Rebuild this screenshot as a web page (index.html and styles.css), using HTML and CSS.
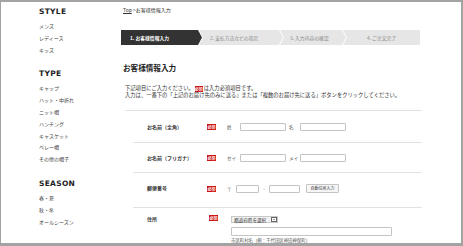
FILE: index.html
```html
<!DOCTYPE html>
<html lang="ja">
<head>
  <meta charset="UTF-8">
  <meta name="viewport" content="width=device-width, initial-scale=1.0">
  <link rel="stylesheet" href="styles.css">
  <title>お客様情報入力</title>
</head>
<body>

<div id="page">
  <div id="sidebar">
    <h3 class="side-title">STYLE</h3>
    <ul class="side-list">
      <li>メンズ</li>
      <li>レディース</li>
      <li>キッズ</li>
    </ul>
    <h3 class="side-title">TYPE</h3>
    <ul class="side-list">
      <li>キャップ</li>
      <li>ハット・中折れ</li>
      <li>ニット帽</li>
      <li>ハンチング</li>
      <li>キャスケット</li>
      <li>ベレー帽</li>
      <li>その他の帽子</li>
    </ul>
    <h3 class="side-title">SEASON</h3>
    <ul class="side-list">
      <li>春・夏</li>
      <li>秋・冬</li>
      <li>オールシーズン</li>
    </ul>
  </div>

  <div id="main">
    <div class="breadcrumb"><a href="#">Top</a> &gt;お客様情報入力</div>

    <div class="steps">
      <div class="step step-1 current">1. お客様情報入力</div>
      <div class="step step-2">2. 支払方法などの指定</div>
      <div class="step step-3">3. 入力内容の確認</div>
      <div class="step step-4">4. ご注文完了</div>
    </div>

    <h2 class="page-title">お客様情報入力</h2>

    <div class="intro">
      <p>下記項目にご入力ください。<span class="req">必須</span>は入力必須項目です。</p>
      <p>入力は、一番下の「上記のお届け先のみに送る」または「複数のお届け先に送る」ボタンをクリックしてください。</p>
    </div>

    <div class="form">
      <div class="form-row row-name">
        <div class="label">お名前（全角）</div>
        <span class="req">必須</span>
        <div class="fields">
          <span class="field-label">姓</span><input class="text" type="text">
          <span class="field-label second">名</span><input class="text" type="text">
        </div>
      </div>

      <div class="form-row row-kana">
        <div class="label">お名前（フリガナ）</div>
        <span class="req">必須</span>
        <div class="fields">
          <span class="field-label">セイ</span><input class="text" type="text">
          <span class="field-label second">メイ</span><input class="text" type="text">
        </div>
      </div>

      <div class="form-row row-zip">
        <div class="label">郵便番号</div>
        <span class="req">必須</span>
        <div class="fields">
          <span class="zip-mark">〒</span><input class="text zip1" type="text">
          <span class="zip-dash">-</span><input class="text zip2" type="text">
          <button class="zip-btn" type="button">自動住所入力</button>
        </div>
      </div>

      <div class="form-row row-address">
        <div class="label">住所</div>
        <span class="req">必須</span>
        <div class="fields column">
          <div class="select">都道府県を選択<span class="select-arrow"></span></div>
          <input class="text address" type="text">
          <div class="hint">市区町村名（例：千代田区神田神保町）</div>
        </div>
      </div>
    </div>
  </div>
</div>

</body>
</html>
```

FILE: styles.css
```css
body {
  margin: 0;
  background-color: #a3a3a3;
  font-family: 'Noto Sans CJK JP', 'Noto Sans', sans-serif;
  color: #333;
}

#page {
  display: flex;
  width: 460px;
  height: 241px;
  margin: 2px 0 0 1px;
  background-color: #fff;
  overflow: hidden;
}

/* sidebar */
#sidebar {
  width: 82px;
  flex-shrink: 0;
  padding: 5px 0 0 38px;
}

.side-title {
  margin: 0 0 3px;
  font-family: 'DejaVu Sans', sans-serif;
  font-size: 7.5px;
  line-height: 10px;
  font-weight: bold;
  letter-spacing: 0.3px;
  color: #222;
}

.side-list {
  list-style: none;
  margin: 0 0 14px;
  padding: 0;
}

.side-list li {
  font-size: 5px;
  line-height: 11.8px;
  color: #444;
}

/* main */
#main {
  width: 302px;
  padding-top: 5px;
}

.breadcrumb {
  padding-left: 2px;
  font-size: 5px;
  line-height: 6px;
  color: #333;
}

.breadcrumb a {
  color: #333;
}

.steps {
  display: flex;
  height: 15px;
  margin-top: 17px;
}

.step {
  height: 15px;
  line-height: 15px;
  font-size: 4.8px;
  color: #888;
  background-color: #e6e6e6;
  white-space: nowrap;
  clip-path: polygon(0 0, calc(100% - 4px) 0, 100% 50%, calc(100% - 4px) 100%, 0 100%, 4px 50%);
  margin-left: -3px;
}

.step-1 {
  width: 81px;
  padding-left: 9px;
  box-sizing: border-box;
  margin-left: 0;
  clip-path: polygon(0 0, calc(100% - 4px) 0, 100% 50%, calc(100% - 4px) 100%, 0 100%);
}

.step-2 {
  width: 84px;
  padding-left: 11px;
  box-sizing: border-box;
}

.step-3 {
  width: 66px;
  padding-left: 10px;
  box-sizing: border-box;
}

.step-4 {
  width: 77px;
  padding-left: 24px;
  box-sizing: border-box;
  clip-path: polygon(0 0, 100% 0, 100% 100%, 0 100%, 4px 50%);
}

.step.current {
  background-color: #333;
  color: #fff;
  font-weight: bold;
}

.page-title {
  margin: 18px 0 0 2px;
  font-size: 7.6px;
  line-height: 10px;
  font-weight: bold;
  color: #222;
}

.intro {
  margin: 12px 0 0 4px;
  padding-bottom: 12px;
  border-bottom: 1px solid #e2e2e2;
  width: 297px;
}

.intro p {
  margin: 0;
  font-size: 5.3px;
  line-height: 6.5px;
  color: #333;
}

.req {
  display: inline-block;
  width: 9px;
  height: 6px;
  line-height: 6px;
  margin: 0 1px;
  font-size: 4px;
  font-weight: bold;
  text-align: center;
  color: #fff;
  background-color: #cc1111;
  vertical-align: middle;
}

.intro .req {
  width: 8px;
}

/* form */
.form {
  margin-left: 12px;
  width: 289px;
}

.form-row {
  display: flex;
  align-items: flex-start;
  padding: 11px 0 10px 14px;
  border-bottom: 1px solid #e2e2e2;
}

.row-name {
  padding: 12px 0 11px 14px;
}

.row-zip {
  padding: 11px 0 14px 14px;
}

.row-address {
  padding: 8px 0 0 14px;
  border-bottom: none;
}

.label {
  width: 60px;
  font-size: 5px;
  line-height: 8px;
  font-weight: bold;
  color: #333;
}

.form-row .req {
  margin: 1px 11px 0 0;
}

.row-zip .req {
  margin-top: 1.5px;
}

.row-address .label,
.row-address .req {
  margin-top: -1px;
}

.row-address .req {
  margin-left: 2px;
}

.fields {
  display: flex;
  align-items: center;
  height: 8px;
}

.row-zip .fields {
  height: 9px;
}

.fields.column {
  flex-direction: column;
  align-items: flex-start;
  height: auto;
  margin-left: 2px;
}

.field-label {
  width: 13px;
  font-size: 4.6px;
  color: #555;
}

.field-label.second {
  width: 11px;
  margin-left: 3px;
}

.text {
  box-sizing: border-box;
  width: 46px;
  height: 8px;
  margin: 0;
  padding: 0;
  border: 1px solid #c4c4c4;
  border-radius: 1px;
  background-color: #fff;
}

.zip-mark {
  width: 9px;
  font-size: 4.6px;
  color: #555;
}

.zip1 {
  width: 23px;
}

.zip-dash {
  width: 10px;
  font-size: 5px;
  text-align: center;
  color: #555;
}

.zip2 {
  width: 31px;
}

.zip-btn {
  height: 9px;
  width: 33px;
  margin: 0 0 0 6px;
  padding: 0;
  font-family: inherit;
  font-size: 4px;
  line-height: 7px;
  color: #333;
  background-color: #f6f6f6;
  border: 1px solid #c4c4c4;
  border-radius: 1px;
}

.select {
  display: flex;
  align-items: center;
  box-sizing: border-box;
  width: 47px;
  height: 7px;
  padding-left: 2px;
  font-size: 4.6px;
  color: #333;
  background-color: #f2f2f2;
  border: 1px solid #c8c8c8;
}

.select-arrow {
  box-sizing: border-box;
  width: 6px;
  height: 5px;
  margin-left: auto;
  border: 1px solid #666;
  background-color: #fff;
  position: relative;
}

.select-arrow::after {
  content: '';
  position: absolute;
  left: 1px;
  top: 1px;
  border-left: 1px solid transparent;
  border-right: 1px solid transparent;
  border-top: 1.5px solid #333;
}

.text.address {
  width: 161px;
  height: 9px;
  margin-top: 4px;
}

.hint {
  margin-top: 1px;
  font-size: 4.4px;
  line-height: 6px;
  color: #555;
}
```
